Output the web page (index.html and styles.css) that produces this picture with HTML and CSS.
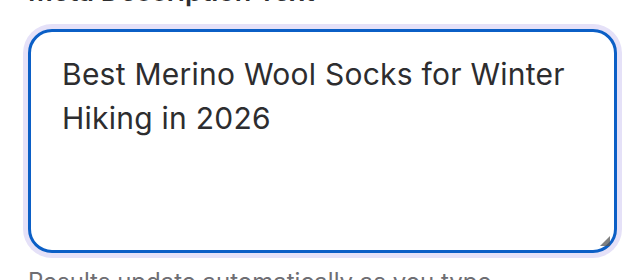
FILE: index.html
```html
<!DOCTYPE html>
<html lang="en">
<head>
  <meta charset="UTF-8" />
  <meta name="viewport" content="width=device-width, initial-scale=1" />
  <title>Meta Description</title>
  <link rel="stylesheet" href="styles.css">
</head>
<body>
  <div class="field">
    <label class="field-label" for="metaDesc">Meta Description Text</label>
    <div class="box">
      <textarea id="metaDesc" class="input">Best Merino Wool Socks for Winter Hiking in 2026</textarea>
      <span class="grip"></span>
    </div>
    <div class="hint">Results update automatically as you type.</div>
  </div>
</body>
</html>
```

FILE: styles.css
```css
* {
  box-sizing: border-box;
}

body {
  margin: 0;
  font-family: Inter, 'Liberation Sans', sans-serif;
  background: #fff;
  color: #2d2d2f;
  overflow: hidden;
}

.field {
  display: flex;
  flex-direction: column;
  margin-top: -25px;
  padding-left: 28px;
}

.field-label {
  font-size: 27px;
  font-weight: 600;
  line-height: 34px;
  color: #2d2d2f;
  margin-bottom: 20px;
}

.box {
  position: relative;
  width: 589px;
  height: 224px;
}

.input {
  display: block;
  width: 100%;
  height: 100%;
  resize: none;
  border: 3px solid #0b5fc6;
  border-radius: 24px;
  box-shadow: 0 0 0 5px #e5e1f8;
  outline: none;
  padding: 20px 31px;
  font-family: inherit;
  font-size: 30px;
  letter-spacing: 0.25px;
  line-height: 44px;
  color: #2d2d2f;
  background: #fff;
}

/* coin de redimensionnement */
.grip {
  position: absolute;
  right: 7px;
  bottom: 7px;
  width: 0;
  height: 0;
  border-left: 10px solid transparent;
  border-bottom: 10px solid #555;
  opacity: 0.75;
}

.hint {
  margin-top: 12px;
  font-size: 24px;
  line-height: 34px;
  color: #6e6e73;
}
```
